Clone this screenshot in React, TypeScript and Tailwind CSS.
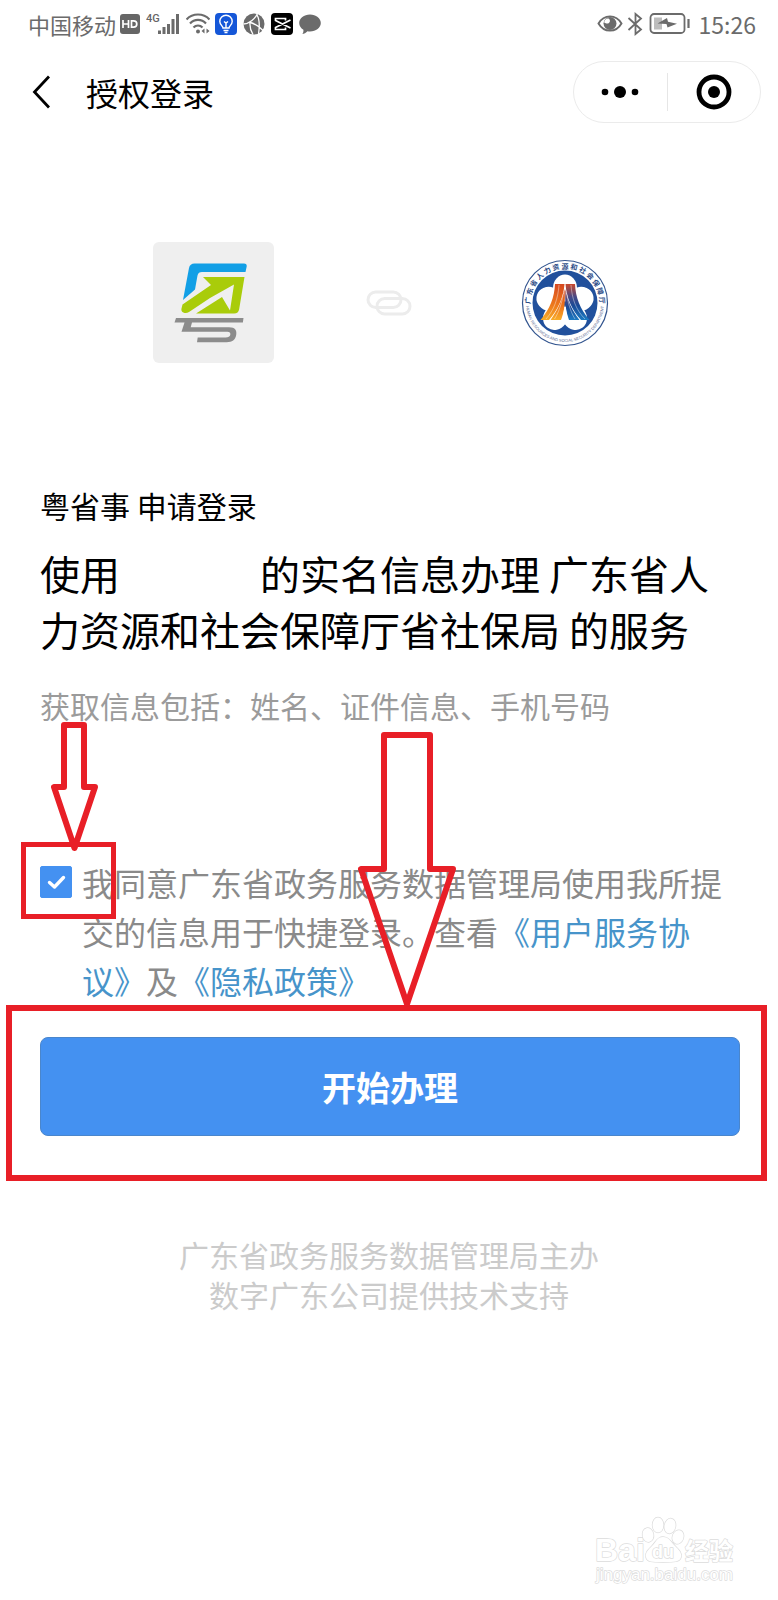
import type { ReactNode } from "react";

const RED = "#e81f27";

const StatusBar = () => (
  <div className="flex h-12 items-center justify-between pr-[22px] pl-7 text-[#6b6b6b]">
    <div className="flex items-center">
      <span className="text-[22px] leading-8">中国移动</span>
      {/* HD */}
      <svg className="ml-1 h-5 w-5" viewBox="0 0 20 20">
        <rect width="20" height="20" rx="3" fill="#666" />
        <path d="M3 6v8M8.500 6v8M3 10h5.500M11.500 6.800v6.400h2c2 0 3.300-1 3.300-3.200s-1.300-3.200-3.300-3.200z" fill="none" stroke="#fff" strokeWidth="1.700" />
      </svg>
      {/* 4G signal */}
      <svg className="ml-1.5 h-6 w-9" viewBox="0 0 36 24">
        <text x="0" y="10" fontSize="11" fontWeight="500" fontFamily="Roboto, sans-serif" fill="#666">4G</text>
        <path d="M13.500 22v-3.500M18 22v-7M22.500 22V12M27 22V7M31.500 22V2" stroke="#6b6b6b" strokeWidth="3" />
      </svg>
      {/* Wifi */}
      <svg className="ml-1 h-6 w-6" viewBox="0 0 24 24" fill="none" stroke="#6b6b6b" strokeWidth="2.200">
        <path d="M0.500 7.500C6.500 0.800 17.500 0.800 23.500 7.500M4 11.500c4.500-4.800 11.500-4.800 16 0M7.500 15.500c2.500-2.700 6.500-2.700 9 0" />
        <circle cx="12" cy="19.500" r="2" fill="#6b6b6b" stroke="none" />
        <path d="M18.500 16.500v5l-3-2.500zM20.500 16.500v5l3-2.500z" fill="#6b6b6b" stroke="none" />
      </svg>
      {/* Bulb app */}
      <svg className="ml-1 h-6 w-6" viewBox="0 0 24 24" fill="none" stroke="#fff" strokeWidth="1.400">
        <rect x="1" y="1" width="22" height="22" rx="4" fill="#1557d8" stroke="none" />
        <path d="M9 16c0-2-3.200-3.200-3.200-6.500a6.200 6.200 0 0 1 12.400 0c0 3.300-3.200 4.500-3.200 6.500zM9.500 18.500h5M10.500 20.500h3M12 16v-5M10 9.500l2 1.500 2-1.500" />
      </svg>
      {/* Browser */}
      <svg className="ml-1 h-6 w-6" viewBox="0 0 24 24">
        <circle cx="12" cy="12" r="10.500" fill="#6b6b6b" />
        <path d="M1.500 12C7 12 13 7 15.500 1.500M8 9.500c-.5 5 .5 9 3 13M8 10.500c5 1 9 4 13 8M15 3c2.500 4 3 9.500 1.500 19" fill="none" stroke="#fff" strokeWidth="1.300" />
      </svg>
      {/* Video editor */}
      <svg className="ml-1 h-6 w-6" viewBox="0 0 24 24">
        <rect x="1" y="1" width="22" height="22" rx="4" fill="#000" />
        <path d="M15.500 8.500V6.500h-10v2L20.500 16M15.500 15.500v2h-10v-2L20.500 8" fill="none" stroke="#fff" strokeWidth="1.700" />
      </svg>
      {/* Chat */}
      <svg className="ml-1 h-6 w-6" viewBox="0 0 24 24">
        <path d="M12 2.500c6 0 10.800 3.700 10.800 8.500S18 19.500 12 19.500c-1 0-1.700-.1-2.500-.2-1.400 1.600-3.500 2.700-5.200 2.700.9-1 1.300-2.500 1.100-4.300C2.800 16.200 1.200 13.700 1.200 11c0-4.800 4.800-8.500 10.800-8.500z" fill="#6b6b6b" />
      </svg>
    </div>
    <div className="flex items-center">
      {/* Eye */}
      <svg className="h-6 w-[26px]" viewBox="0 0 26 24">
        <path d="M1.500 11.500C7 2 19 2 24.500 11.500 19 21 7 21 1.500 11.500z" fill="none" stroke="#6b6b6b" strokeWidth="1.900" />
        <circle cx="13" cy="11.500" r="6.500" fill="#6b6b6b" />
        <path d="M11.500 6.500c2.700 1.500 1.500 5.500-2 5-1.200-.2-1.700-.6-2.300-1 0-2.500 2-4.500 4.300-4z" fill="#fff" />
      </svg>
      {/* Bluetooth */}
      <svg className="ml-1 h-6 w-4" viewBox="0 0 16 24" fill="none" stroke="#6b6b6b" strokeWidth="1.800">
        <path d="M1.500 6L14 17.500l-5.500 4.500V2L14 6.500 1.500 18" />
      </svg>
      {/* Battery */}
      <svg className="ml-1.5 h-6 w-[42px]" viewBox="0 0 42 24">
        <rect x="1.500" y="2" width="34" height="19" rx="3.500" fill="none" stroke="#6b6b6b" strokeWidth="1.800" />
        <rect x="5" y="5.500" width="8" height="12" fill="#bdbdbd" />
        <path d="M8.500 11.500L18 6l1 3.700 9 2L18.500 15.500l-1-3.500z" fill="#6b6b6b" />
        <path d="M39.500 7v9" stroke="#6b6b6b" strokeWidth="2.200" />
      </svg>
      <span className="ml-2 text-[23px] leading-8">15:26</span>
    </div>
  </div>
);

const NavBar = () => (
  <header className="flex h-[88px] items-center justify-between pr-[17px] pl-[30px]">
    <div className="flex items-center gap-9">
      <button type="button" aria-label="返回">
        <svg className="h-9 w-5" viewBox="0 0 20 36" fill="none" stroke="#000" strokeWidth="2.800">
          <path d="M19 2.500L4.500 18 19 33.500" />
        </svg>
      </button>
      <h1 className="text-[32px] leading-10">授权登录</h1>
    </div>
    <div className="flex h-[62px] w-[188px] items-center rounded-full border border-[#ebebeb]">
      <button type="button" aria-label="更多" className="flex flex-1 justify-center">
        <svg className="h-4 w-10" viewBox="0 0 40 16">
          <circle cx="5" cy="8" r="3.300" />
          <circle cx="20" cy="8" r="6" />
          <circle cx="35" cy="8" r="3.300" />
        </svg>
      </button>
      <div className="h-[38px] w-px bg-[#e6e6e6]" />
      <button type="button" aria-label="关闭" className="flex flex-1 justify-center">
        <svg className="h-9 w-9" viewBox="0 0 36 36">
          <circle cx="18" cy="18" r="15" fill="none" stroke="#000" strokeWidth="4.800" />
          <circle cx="18" cy="18" r="6" />
        </svg>
      </button>
    </div>
  </header>
);

const YueLogo = () => (
  <svg className="h-[121px] w-[121px] rounded-md bg-[#efefef]" viewBox="0 0 121 121">
    <path d="M30 58l6-32c.6-3 2.500-4.500 5.500-4.500H91c2 0 3 1 2.700 3L92.500 30H49c-2.500 0-4 1-4.500 3.500l-2.500 14z" fill="#129fe6" />
    <path d="M50 35h41.500l-5.300 32c-.5 3-2.200 4.500-5 4.500H43l26-16.500 8 13.500 4-26-24 13.500L36 70c-3 2-8.500 1-7.500-3.500l1-4L58 43z" fill="#a9cc0a" />
    <path d="M23 76h67.500l-.6 4.500H39l-1.300 4.800H76c6.500 0 8 3.500 7.200 7.700-.9 5-4 7.200-9.500 7.200H44l.7-4.700h28c2.600 0 4.200-.7 4.600-2.700.4-2-.7-3-3-3H28.500l3-9.300h-10z" fill="#8c8c8c" />
  </svg>
);

const LinkIcon = () => (
  <svg className="h-7 w-12" viewBox="0 0 48 28" fill="none" stroke="#ececec" strokeWidth="3">
    <rect x="3" y="3" width="33" height="15.500" rx="7.700" />
    <rect x="12" y="9.500" width="33" height="15.500" rx="7.700" />
  </svg>
);

const petals = [0, 72, 144, 216, 288];

const BureauEmblem = () => (
  <svg className="h-[88px] w-[88px]" viewBox="0 0 88 88">
    <defs>
      <path id="ring-top" d="M12 57A34.500 34.500 0 1 1 76 57" />
      <path id="ring-bottom" d="M5 44A39 39 0 0 0 83 44" />
      <linearGradient id="flame" x1="0" y1="0" x2="0" y2="1">
        <stop offset="0" stopColor="#d6481f" />
        <stop offset="0.600" stopColor="#ee7a1c" />
        <stop offset="1" stopColor="#f8ad2a" />
      </linearGradient>
      <linearGradient id="river" x1="0" y1="0" x2="0" y2="1">
        <stop offset="0" stopColor="#c9482c" />
        <stop offset="0.350" stopColor="#4a4a86" />
        <stop offset="0.600" stopColor="#1a4a96" />
        <stop offset="1" stopColor="#1b7ac2" />
      </linearGradient>
    </defs>
    <circle cx="44" cy="44" r="42.500" fill="#fff" stroke="#33558f" strokeWidth="1.200" />
    <circle cx="44" cy="44" r="32.500" fill="#21509c" />
    {petals.map((angle) => (
      <ellipse key={angle} cx="44" cy="29" rx="12" ry="13.500" fill="#fff" transform={`rotate(${angle} 44 45)`} />
    ))}
    <path d="M34 25h9.500c-1 14-7 26-15.500 36h-8.500C29 50 33.500 38 34 25z" fill="url(#flame)" />
    <path d="M43.500 30c.8 12 .5 21-3.500 31H29.500C36 52 41 42 43.500 30z" fill="url(#flame)" />
    <path d="M44.500 25H54c.5 13 5 25 14.500 36H60C51 51 45.500 39 44.500 25z" fill="url(#river)" />
    <path d="M44.500 30c2 12 7 22 14 31H48c-3.500-10-4.300-19-3.500-31z" fill="url(#river)" />
    <path d="M38 26c-1 14-5 25-13 34M42.500 34c-1.500 9-4 18-9 26M50 26c1 14 5 25 14 34M45.500 34c1.500 9 3.500 18 8.500 26" fill="none" stroke="#fff" strokeWidth="0.400" />
    <path d="M44 46l3 15h-6z" fill="#fff" />
    <text fontSize="7" fontWeight="700" fill="#2a4a86">
      <textPath href="#ring-top" startOffset="50%" textAnchor="middle">
        广 东 省 人 力 资 源 和 社 会 保 障 厅
      </textPath>
    </text>
    <text fontSize="4" fontFamily="Liberation Sans, sans-serif" fill="#5a6a92">
      <textPath href="#ring-bottom" startOffset="50%" textAnchor="middle">
        HUMAN RESOURCES AND SOCIAL SECURITY DEPARTMENT
      </textPath>
    </text>
  </svg>
);

const PolicyLink = ({ children }: { children: ReactNode }) => (
  <a href="#" className="text-[#4794ca]">
    {children}
  </a>
);

const Agreement = () => (
  <div className="relative mt-[133px] flex gap-[10px] px-10">
    <input
      id="agree"
      type="checkbox"
      defaultChecked
      className="peer mt-2 h-8 w-8 shrink-0 appearance-none rounded-xs border border-[#4491f1] checked:bg-[#4491f1]"
    />
    <svg className="pointer-events-none absolute top-2 left-10 hidden h-8 w-8 peer-checked:block" viewBox="0 0 32 32" fill="none">
      <path d="M9.500 16.500l5 4.500 9-9.500" stroke="#fff" strokeWidth="3.400" strokeLinecap="round" strokeLinejoin="round" />
    </svg>
    <label htmlFor="agree" className="text-[32px] leading-[49px] text-[#8a8a8a]">
      我同意广东省政务服务数据管理局使用我所提交的信息用于快捷登录。查看
      <PolicyLink>《用户服务协议》</PolicyLink>及<PolicyLink>《隐私政策》</PolicyLink>
    </label>

    {/* Markers pointing at the tick box and at the button */}
    <div className="pointer-events-none absolute -top-4 left-[21px] h-[77px] w-[95px] border-[5px] border-[#e81f27]" />
    <svg className="pointer-events-none absolute -top-[138px] left-[50px] h-[132px] w-[50px]" viewBox="0 0 50 132" fill="none" stroke={RED} strokeWidth="6" strokeLinejoin="round">
      <path d="M14 5h20v62h11L24.500 128 4 67h10z" />
    </svg>
    <svg className="pointer-events-none absolute -top-[128px] left-[357px] h-[280px] w-[100px]" viewBox="0 0 100 280" fill="none" stroke={RED} strokeWidth="6" strokeLinejoin="round">
      <path d="M27 5h46v134h23L50 274 4 139h23z" />
    </svg>
  </div>
);

const Watermark = () => (
  <svg
    className="h-[76px] w-[144px]"
    viewBox="0 0 144 76"
    fill="#fff"
    stroke="#dcdcdc"
    strokeWidth="1.400"
    paintOrder="stroke"
    strokeLinejoin="round"
    role="img"
    aria-label="Baidu 经验"
  >
    <text x="1" y="49" fontSize="32" fontWeight="700" fontFamily="Liberation Sans, sans-serif">Bai</text>
    <ellipse cx="54" cy="23" rx="5.500" ry="7" transform="rotate(-12 54 23)" />
    <ellipse cx="64" cy="13" rx="5.500" ry="7.500" />
    <ellipse cx="76" cy="14" rx="5.500" ry="7.500" transform="rotate(12 76 14)" />
    <ellipse cx="84" cy="25" rx="5.500" ry="7" transform="rotate(20 84 25)" />
    <path d="M69 25c6 0 8 5 12 9s7 7 6 11c-1 5-7 5-18 5s-16 0-17-5c-1-4 2-7 6-11s5-9 11-9z" />
    <text x="58" y="46" fontSize="18" fontWeight="700" fontFamily="Liberation Sans, sans-serif">du</text>
    <text x="91" y="48" fontSize="24" fontWeight="700">经验</text>
    <text x="2" y="68" fontSize="17" fontFamily="Liberation Sans, sans-serif">jingyan.baidu.com</text>
  </svg>
);

const App = () => {
  return (
    <div className="flex min-h-screen flex-col bg-white font-['Noto_Sans_CJK_SC',sans-serif] text-black">
      <StatusBar />
      <NavBar />

      <main>
        <div className="mx-auto mt-[106px] grid w-full max-w-[528px] grid-cols-3 place-items-center">
          <YueLogo />
          <LinkIcon />
          <BureauEmblem />
        </div>

        <section className="px-10 pt-[122px]">
          <p className="text-[30px] leading-10">粤省事 申请登录</p>
          <h2 className="mt-5 text-[40px] leading-[56px]">
            使用
            <span className="inline-block w-[140px]" />
            的实名信息办理 广东省人力资源和社会保障厅省社保局 的服务
          </h2>
          <p className="mt-7 text-[30px] leading-10 text-[#9b9b9b]">获取信息包括：姓名、证件信息、手机号码</p>
        </section>

        <Agreement />

        <div className="mr-[11px] ml-[6px] border-6 border-[#e81f27] pt-[26px] pr-[21px] pb-[39px] pl-7">
          <button
            type="button"
            className="h-[99px] w-full rounded-lg border border-[#4a86cc] bg-[#4491f1] text-[34px] font-bold text-white"
          >
            开始办理
          </button>
        </div>
      </main>

      <footer className="mt-[53px] text-center text-[30px] leading-10 text-[#cbcbcb]">
        <p>广东省政务服务数据管理局主办</p>
        <p>数字广东公司提供技术支持</p>
      </footer>

      <div className="mt-auto flex justify-end pr-10 pb-3">
        <Watermark />
      </div>
    </div>
  );
};

export default App;
